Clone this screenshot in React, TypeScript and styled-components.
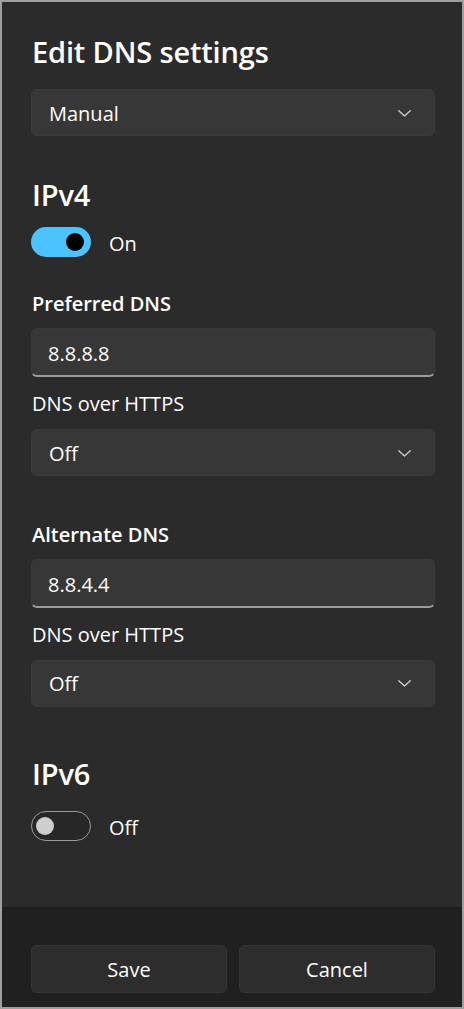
import React, { useState } from "react";
import styled, { createGlobalStyle } from "styled-components";

const GlobalStyle = createGlobalStyle`
  html, body {
    margin: 0;
    padding: 0;
    background: #9e9e9e;
  }
  body {
    font-family: "Open Sans", "Noto Sans", "Liberation Sans", sans-serif;
    color: #ffffff;
  }
  * {
    box-sizing: border-box;
  }
`;

const Dialog = styled.div`
  width: 464px;
  height: 1009px;
  border: 2px solid #9e9e9e;
  background: #2b2b2b;
  display: flex;
  flex-direction: column;
`;

const Body = styled.div`
  flex: 1;
  padding: 29.5px 27px 0 29px;
  display: flex;
  flex-direction: column;
`;

const Title = styled.h1<{ $mt?: number }>`
  margin: ${(p) => p.$mt ?? 0}px 0 0 1px;
  font-size: 29px;
  line-height: 40px;
  font-weight: 600;
  letter-spacing: -0.15px;
`;

const Label = styled.div<{ $mt: number; $bold?: boolean }>`
  margin: ${(p) => p.$mt}px 0 0 1px;
  font-size: 20px;
  line-height: 28px;
  font-weight: ${(p) => (p.$bold ? 600 : 400)};
`;

const Select = styled.div<{ $mt: number }>`
  margin-top: ${(p) => p.$mt}px;
  height: 47px;
  border: 1px solid #3c3c3c;
  border-radius: 6px;
  background: #373737;
  display: flex;
  align-items: center;
  justify-content: space-between;
  padding: 1px 23px 0 17px;
  font-size: 20px;
`;

const Input = styled.div<{ $mt: number }>`
  margin-top: ${(p) => p.$mt}px;
  height: 49px;
  border: 1px solid #3a3a3a;
  border-bottom: 2px solid #9c9c9c;
  border-radius: 6px;
  background: #373737;
  display: flex;
  align-items: center;
  padding: 2px 16px 0;
  font-size: 20px;
`;

const ToggleRow = styled.div<{ $mt: number }>`
  margin-top: ${(p) => p.$mt}px;
  display: flex;
  align-items: center;
  gap: 18px;
  font-size: 20px;
  height: 30px;
`;

const ToggleText = styled.span`
  padding-top: 3px;
`;

const Track = styled.button<{ $on: boolean }>`
  width: 60px;
  height: 30px;
  border-radius: 15px;
  cursor: pointer;
  display: flex;
  align-items: center;
  justify-content: ${(p) => (p.$on ? "flex-end" : "flex-start")};
  padding: 0 ${(p) => (p.$on ? 7 : 4)}px;
  background: ${(p) => (p.$on ? "#4cc2ff" : "#272727")};
  border: ${(p) => (p.$on ? "none" : "1.5px solid #9a9a9a")};
`;

const Knob = styled.span<{ $on: boolean }>`
  width: 18px;
  height: 18px;
  border-radius: 50%;
  background: ${(p) => (p.$on ? "#000000" : "#cecece")};
`;

const Footer = styled.div`
  height: 100px;
  background: #202020;
  padding: 38px 27px 0 29px;
  display: grid;
  grid-template-columns: 1fr 1fr;
  gap: 12px;
  align-items: start;
`;

const Button = styled.button`
  height: 48px;
  border-radius: 6px;
  border: 1px solid #353535;
  background: #2d2d2d;
  color: #ffffff;
  font-family: inherit;
  font-size: 20px;
  padding: 0;
  cursor: pointer;
`;

const Chevron = () => (
  <svg width="13" height="7" viewBox="0 0 13 7" fill="none">
    <path d="M0.75 0.75 L6.5 6 L12.25 0.75" stroke="#d0d0d0" strokeWidth="1.3" strokeLinecap="round" strokeLinejoin="round" />
  </svg>
);

const Toggle = ({ on, onClick }: { on: boolean; onClick: () => void }) => (
  <Track $on={on} onClick={onClick}>
    <Knob $on={on} />
  </Track>
);

export default function App() {
  const [v4, setV4] = useState(true);
  const [v6, setV6] = useState(false);

  return (
    <>
      <GlobalStyle />
      <Dialog>
        <Body>
          <Title>Edit DNS settings</Title>
          <Select $mt={17.5}>
            <span>Manual</span>
            <Chevron />
          </Select>

          <Title $mt={38.5}>IPv4</Title>
          <ToggleRow $mt={12.5}>
            <Toggle on={v4} onClick={() => setV4(!v4)} />
            <ToggleText>{v4 ? "On" : "Off"}</ToggleText>
          </ToggleRow>

          <Label $mt={32.5} $bold>Preferred DNS</Label>
          <Input $mt={10.5}>8.8.8.8</Input>
          <Label $mt={12.5}>DNS over HTTPS</Label>
          <Select $mt={11.5}>
            <span>Off</span>
            <Chevron />
          </Select>

          <Label $mt={44.5} $bold>Alternate DNS</Label>
          <Input $mt={10.5}>8.8.4.4</Input>
          <Label $mt={13}>DNS over HTTPS</Label>
          <Select $mt={10.5}>
            <span>Off</span>
            <Chevron />
          </Select>

          <Title $mt={47.5}>IPv6</Title>
          <ToggleRow $mt={16.5}>
            <Toggle on={v6} onClick={() => setV6(!v6)} />
            <ToggleText>{v6 ? "On" : "Off"}</ToggleText>
          </ToggleRow>
        </Body>
        <Footer>
          <Button>Save</Button>
          <Button>Cancel</Button>
        </Footer>
      </Dialog>
    </>
  );
}
